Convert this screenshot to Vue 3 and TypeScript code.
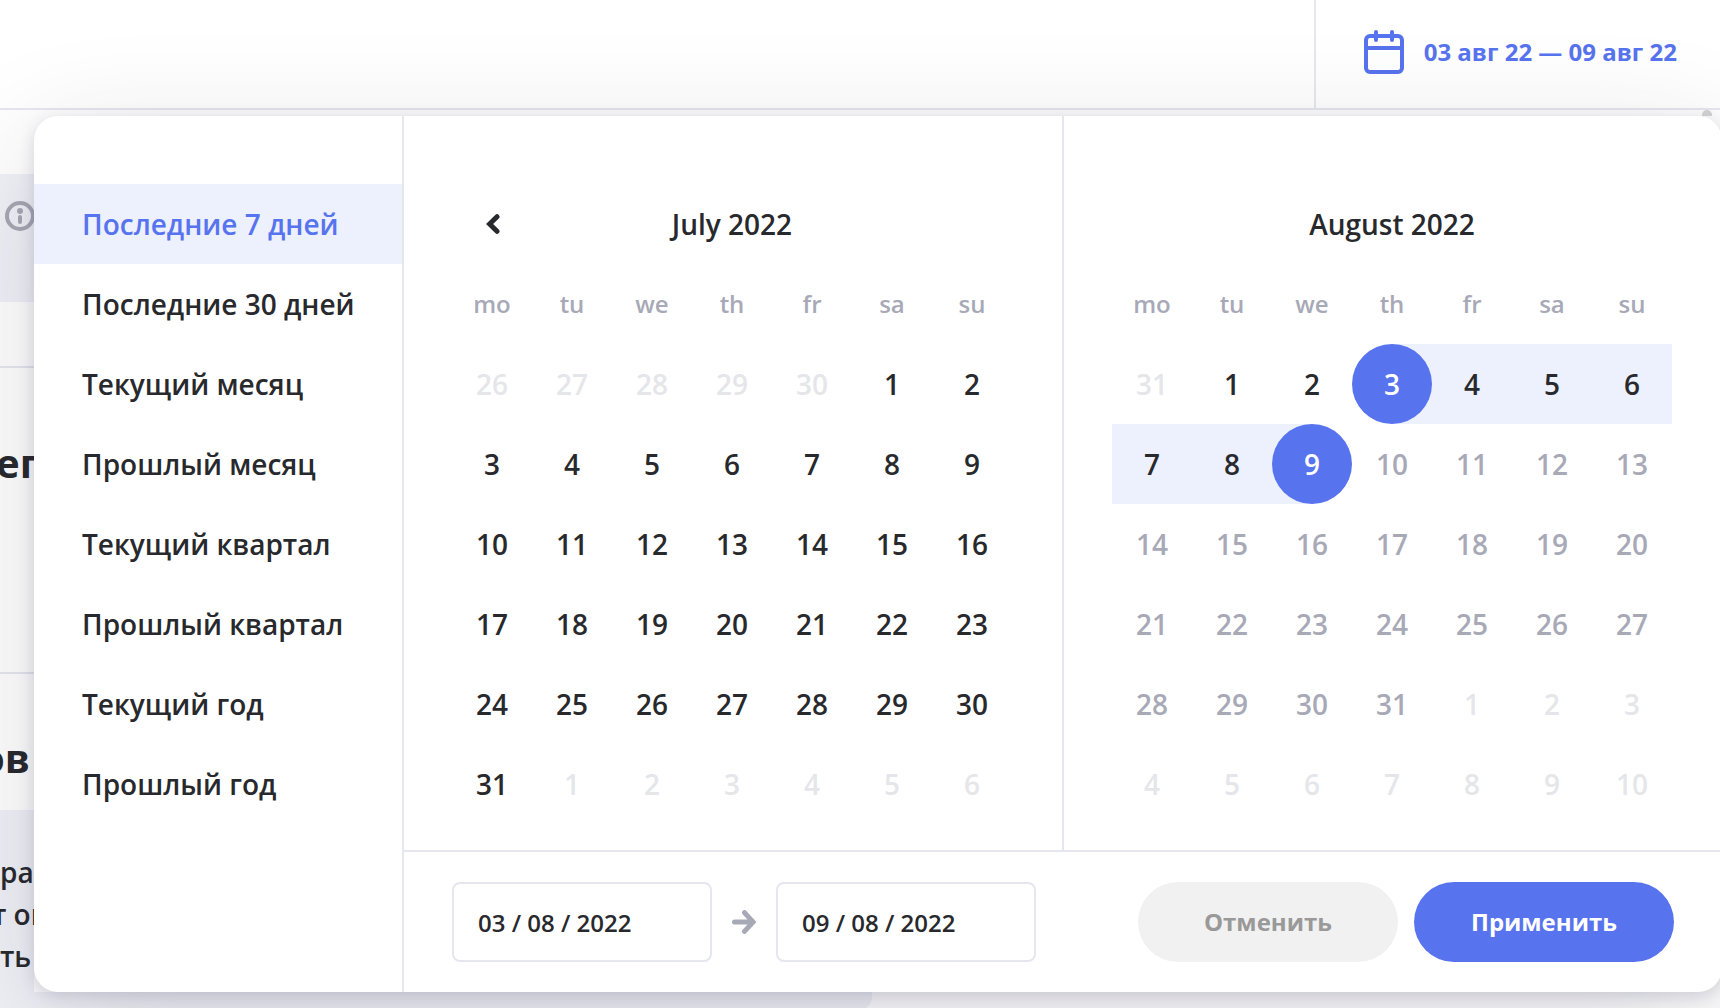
<script setup lang="ts">
import { ref } from 'vue'

type DayState = 'normal' | 'outside' | 'disabled' | 'range' | 'start' | 'end'

interface Day {
  value: number
  state: DayState
}

interface Month {
  title: string
  hasPrev: boolean
  weeks: Day[][]
}

const weekdays = ['mo', 'tu', 'we', 'th', 'fr', 'sa', 'su']

const presets = [
  'Последние 7 дней',
  'Последние 30 дней',
  'Текущий месяц',
  'Прошлый месяц',
  'Текущий квартал',
  'Прошлый квартал',
  'Текущий год',
  'Прошлый год',
]
const activePreset = ref(0)
const dateFrom = ref('03 / 08 / 2022')
const dateTo = ref('09 / 08 / 2022')

function span(from: number, to: number, state: DayState): Day[] {
  return Array.from({ length: to - from + 1 }, (_, i) => ({ value: from + i, state }))
}

function toWeeks(days: Day[]): Day[][] {
  const weeks: Day[][] = []
  for (let i = 0; i < days.length; i += 7) weeks.push(days.slice(i, i + 7))
  return weeks
}

const months: Month[] = [
  {
    title: 'July 2022',
    hasPrev: true,
    weeks: toWeeks([...span(26, 30, 'outside'), ...span(1, 31, 'normal'), ...span(1, 6, 'outside')]),
  },
  {
    title: 'August 2022',
    hasPrev: false,
    weeks: toWeeks([
      ...span(31, 31, 'outside'),
      ...span(1, 2, 'normal'),
      ...span(3, 3, 'start'),
      ...span(4, 8, 'range'),
      ...span(9, 9, 'end'),
      ...span(10, 31, 'disabled'),
      ...span(1, 10, 'outside'),
    ]),
  },
]
</script>

<template>
  <div class="page">
    <header class="header">
      <button class="period" type="button">
        <svg width="40" height="44" viewBox="0 0 40 44" fill="none" stroke="currentColor" stroke-width="4" aria-hidden="true">
          <rect x="2" y="6" width="36" height="36" rx="4" />
          <path d="M2 18h36" />
          <path d="M12 2v8M28 2v8" stroke-linecap="round" />
        </svg>
        <span>03 авг 22 — 09 авг 22</span>
      </button>
    </header>

    <main class="content">
      <div class="scroll-thumb"></div>
      <section class="notice">
        <svg class="info" width="32" height="32" viewBox="0 0 32 32" aria-hidden="true">
          <circle cx="16" cy="16" r="13" fill="none" stroke="currentColor" stroke-width="4" />
          <circle cx="16" cy="11" r="3" fill="currentColor" />
          <rect x="14" y="15" width="4" height="9" rx="2" fill="currentColor" />
        </svg>
      </section>
      <section class="row row-first"></section>
      <section class="row row-second"><h2>ег</h2></section>
      <section class="row row-third"><h2>ов</h2></section>
      <section class="card">
        <p>ра</p>
        <p class="clipped">т оп</p>
        <p>ть</p>
      </section>
    </main>

    <div class="popup-holder">
      <div class="popup" role="dialog" aria-label="03 авг 22 — 09 авг 22">
        <nav class="presets">
          <button
            v-for="(preset, i) in presets"
            :key="preset"
            type="button"
            :class="['preset', { active: i === activePreset }]"
            @click="activePreset = i"
          >
            {{ preset }}
          </button>
        </nav>

        <div class="picker">
          <div class="months">
            <section v-for="month in months" :key="month.title" class="month">
              <div class="month-head">
                <button v-if="month.hasPrev" class="prev" type="button" aria-label="Previous month">
                  <svg width="16" height="20" viewBox="0 0 16 20" fill="none" stroke="currentColor" stroke-width="5" stroke-linecap="round" stroke-linejoin="miter" aria-hidden="true">
                    <path d="M13 2.700L5.600 10L13 17.300" />
                  </svg>
                </button>
                <h3>{{ month.title }}</h3>
              </div>
              <table>
                <thead>
                  <tr>
                    <th v-for="name in weekdays" :key="name" scope="col">{{ name }}</th>
                  </tr>
                </thead>
                <tbody>
                  <tr v-for="(week, w) in month.weeks" :key="w">
                    <td v-for="(day, d) in week" :key="d" :class="day.state">
                      <button type="button" class="day" :disabled="day.state === 'disabled'">{{ day.value }}</button>
                    </td>
                  </tr>
                </tbody>
              </table>
            </section>
          </div>

          <form class="footer" @submit.prevent>
            <input v-model="dateFrom" type="text" aria-label="From" />
            <svg class="arrow" width="24" height="24" viewBox="0 0 24 24" fill="none" stroke="currentColor" stroke-width="5" stroke-linecap="round" aria-hidden="true">
              <path d="M2.500 12H20" />
              <path d="M12.500 2.600L21 12L12.500 21.400" />
            </svg>
            <input v-model="dateTo" type="text" aria-label="To" />
            <div class="actions">
              <button class="btn cancel" type="button">Отменить</button>
              <button class="btn apply" type="submit">Применить</button>
            </div>
          </form>
        </div>
      </div>
    </div>
  </div>
</template>

<style>
body {
  background: #fff;
  overflow: hidden;
}
</style>

<style scoped>
.page,
.page * {
  box-sizing: border-box;
}
.page {
  position: relative;
  min-height: 100vh;
  overflow: hidden;
  font-family: "Open Sans", "Noto Sans", sans-serif;
  font-size: 28px;
  font-weight: 600;
  color: #28292d;
}
button,
input {
  font: inherit;
  color: inherit;
  margin: 0;
  padding: 0;
  border: 0;
  background: none;
}
h2,
h3,
p {
  margin: 0;
  font-weight: inherit;
}
.header {
  display: flex;
  justify-content: flex-end;
  height: 110px;
  border-bottom: 2px solid #e6e7ee;
}
.period {
  display: flex;
  align-items: center;
  gap: 20px;
  padding: 0 43px 4px 48px;
  border-left: 2px solid #e6e7ee;
  color: #5773ee;
  font-size: 24px;
  line-height: 34px;
  font-weight: 700;
}
.content {
  display: flex;
  flex-direction: column;
  height: calc(100vh - 110px);
}
.content > * {
  flex-shrink: 0;
}
.scroll-thumb {
  align-self: flex-end;
  width: 10px;
  height: 64px;
  margin-right: 8px;
  border-radius: 5px;
  background: #d6d6d6;
}
.notice {
  height: 128px;
  padding: 26px 4px;
  background: #f1f2f7;
  color: #a8a8b4;
}
.row {
  border-bottom: 2px solid #e6e7ee;
}
.row h2 {
  margin-left: -4px;
  font-size: 40px;
  line-height: 54px;
  font-weight: 700;
}
.row-first {
  height: 66px;
}
.row-second {
  height: 306px;
  padding-top: 68px;
}
.row-third {
  height: 136px;
  padding-top: 57px;
  border: 0;
}
.row-third h2 {
  margin-left: -20px;
}
.card {
  width: 872px;
  height: 202px;
  padding-top: 41px;
  border-radius: 0 0 16px 0;
  background: #f1f2f7;
}
.card p {
  line-height: 42px;
}
.card .clipped {
  margin-left: -8px;
}
.popup-holder {
  position: absolute;
  top: 116px;
  left: 34px;
  right: -2px;
  background: #fff;
}
.popup {
  display: flex;
  border-radius: 24px;
  background: #fff;
  box-shadow: 0 4px 16px rgba(40, 40, 80, 0.16), 0 32px 120px rgba(40, 40, 60, 0.16);
}
.presets {
  display: flex;
  flex-direction: column;
  flex: none;
  width: 370px;
  padding: 68px 0;
  border-right: 2px solid #e6e7ee;
}
.preset {
  height: 80px;
  padding-left: 48px;
  text-align: left;
  white-space: nowrap;
}
.preset.active {
  background: #edf0fd;
  color: #5773ee;
}
.picker {
  flex: 1;
  min-width: 0;
}
.months {
  display: flex;
}
.month {
  box-sizing: content-box;
  flex: 1 1 0;
  padding: 68px 50px 26px 48px;
}
.month + .month {
  border-left: 2px solid #e6e7ee;
}
.month-head {
  display: grid;
  grid-template-columns: repeat(7, 1fr);
  align-items: center;
  height: 80px;
}
.month-head h3 {
  grid-column: 2 / 7;
  grid-row: 1;
  font-size: 28px;
  text-align: center;
}
.prev {
  grid-column: 1;
  grid-row: 1;
  display: flex;
  align-items: center;
  justify-content: center;
  height: 80px;
}
table {
  width: 100%;
  table-layout: fixed;
  border-collapse: collapse;
}
th {
  height: 80px;
  padding: 0 0 2px;
  color: #a8a9b7;
  font-size: 24px;
  font-weight: 600;
}
td {
  height: 80px;
  padding: 0;
}
.day {
  display: block;
  width: 100%;
  height: 80px;
  text-align: center;
}
.outside {
  color: #e5e6ea;
}
.disabled {
  color: #a8a9b7;
}
.range {
  background: #edf0fd;
}
.start {
  background: linear-gradient(90deg, transparent 50%, #edf0fd 50%);
}
.end {
  background: linear-gradient(270deg, transparent 50%, #edf0fd 50%);
}
.start .day,
.end .day {
  border-radius: 40px;
  background: #5773ee;
  color: #fff;
}
.footer {
  display: flex;
  align-items: center;
  padding: 30px 48px;
  border-top: 2px solid #e6e7ee;
  font-size: 24px;
}
.footer input {
  width: 260px;
  height: 80px;
  padding: 0 24px;
  border: 2px solid #e6e7ee;
  border-radius: 8px;
}
.arrow {
  margin: 0 20px;
  color: #a8a9b7;
}
.actions {
  display: flex;
  gap: 16px;
  margin-left: auto;
}
.btn {
  width: 260px;
  height: 80px;
  padding-bottom: 2px;
  border-radius: 40px;
  font-weight: 700;
}
.cancel {
  background: #f1f1f1;
  color: #999;
}
.apply {
  background: #5773ee;
  color: #fff;
}
</style>
